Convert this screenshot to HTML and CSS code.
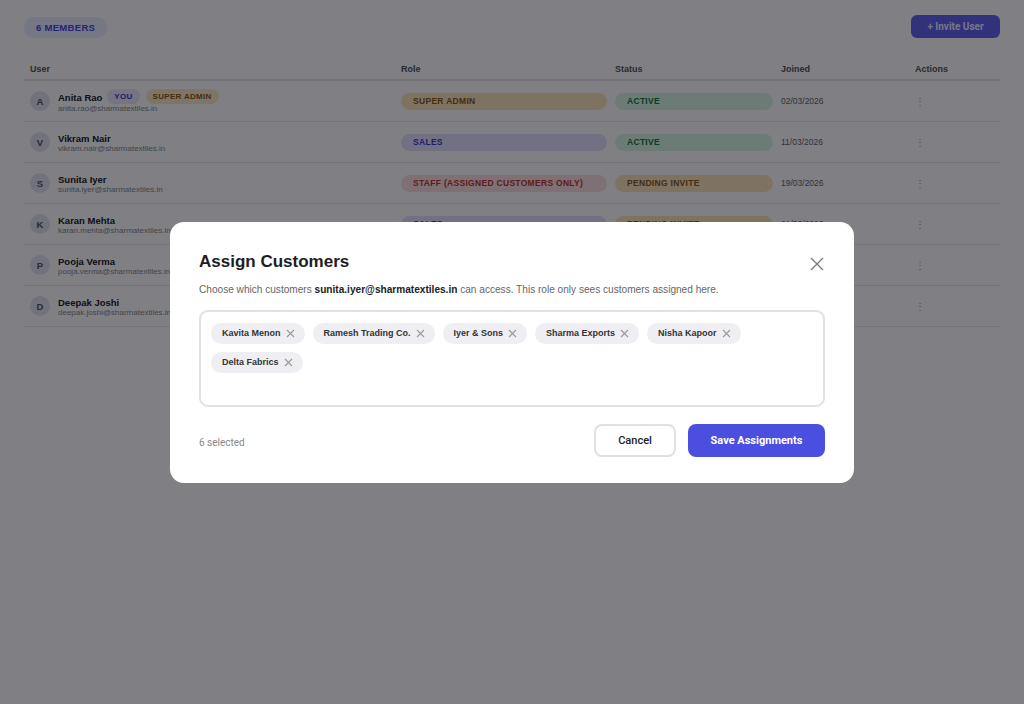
FILE: index.html
```html
<!DOCTYPE html>
<html>

<head>
    <meta http-equiv="Content-Type" content="text/html;charset=UTF-8" />
    <meta name="viewport" content="width=device-width,initial-scale=1">
    <title>Team Members</title>
    <link rel="stylesheet" href="styles.css">
</head>

<body>
    <div class="page">
        <div class="toolbar">
            <span class="count">6 MEMBERS</span>
            <button class="invite">+ Invite User</button>
        </div>
        <div class="table">
            <div class="row head">
                <div class="cell">User</div>
                <div class="cell">Role</div>
                <div class="cell">Status</div>
                <div class="cell">Joined</div>
                <div class="cell">Actions</div>
            </div>
            <div class="row">
                <div class="cell user">
                    <span class="avatar">A</span>
                    <div class="who">
                        <div class="name">Anita Rao <span class="tag you">YOU</span><span class="tag admin">SUPER ADMIN</span></div>
                        <div class="email">anita.rao@sharmatextiles.in</div>
                    </div>
                </div>
                <div class="cell"><span class="pill yellow">SUPER ADMIN</span></div>
                <div class="cell"><span class="pill green">ACTIVE</span></div>
                <div class="cell date">02/03/2026</div>
                <div class="cell more">&#8942;</div>
            </div>
            <div class="row">
                <div class="cell user">
                    <span class="avatar">V</span>
                    <div class="who">
                        <div class="name">Vikram Nair</div>
                        <div class="email">vikram.nair@sharmatextiles.in</div>
                    </div>
                </div>
                <div class="cell"><span class="pill purple">SALES</span></div>
                <div class="cell"><span class="pill green">ACTIVE</span></div>
                <div class="cell date">11/03/2026</div>
                <div class="cell more">&#8942;</div>
            </div>
            <div class="row">
                <div class="cell user">
                    <span class="avatar">S</span>
                    <div class="who">
                        <div class="name">Sunita Iyer</div>
                        <div class="email">sunita.iyer@sharmatextiles.in</div>
                    </div>
                </div>
                <div class="cell"><span class="pill red">STAFF (ASSIGNED CUSTOMERS ONLY)</span></div>
                <div class="cell"><span class="pill yellow">PENDING INVITE</span></div>
                <div class="cell date">19/03/2026</div>
                <div class="cell more">&#8942;</div>
            </div>
            <div class="row">
                <div class="cell user">
                    <span class="avatar">K</span>
                    <div class="who">
                        <div class="name">Karan Mehta</div>
                        <div class="email">karan.mehta@sharmatextiles.in</div>
                    </div>
                </div>
                <div class="cell"><span class="pill purple">SALES</span></div>
                <div class="cell"><span class="pill yellow">PENDING INVITE</span></div>
                <div class="cell date">21/03/2026</div>
                <div class="cell more">&#8942;</div>
            </div>
            <div class="row">
                <div class="cell user">
                    <span class="avatar">P</span>
                    <div class="who">
                        <div class="name">Pooja Verma</div>
                        <div class="email">pooja.verma@sharmatextiles.in</div>
                    </div>
                </div>
                <div class="cell"><span class="pill red">STAFF (ASSIGNED CUSTOMERS ONLY)</span></div>
                <div class="cell"><span class="pill green">ACTIVE</span></div>
                <div class="cell date">24/03/2026</div>
                <div class="cell more">&#8942;</div>
            </div>
            <div class="row">
                <div class="cell user">
                    <span class="avatar">D</span>
                    <div class="who">
                        <div class="name">Deepak Joshi</div>
                        <div class="email">deepak.joshi@sharmatextiles.in</div>
                    </div>
                </div>
                <div class="cell"><span class="pill purple">SALES</span></div>
                <div class="cell"><span class="pill green">ACTIVE</span></div>
                <div class="cell date">27/03/2026</div>
                <div class="cell more">&#8942;</div>
            </div>
        </div>
    </div>

    <div class="overlay">
        <div class="modal">
            <div class="modal_head">
                <h2>Assign Customers</h2>
                <button class="close" aria-label="Close">
                    <svg width="14" height="14" viewBox="0 0 14 14"><path d="M1 1L13 13M13 1L1 13" stroke="#777" stroke-width="1.3" fill="none"/></svg>
                </button>
            </div>
            <p class="desc">Choose which customers <b>sunita.iyer@sharmatextiles.in</b> can access. This role only sees customers assigned here.</p>
            <div class="picker">
                <span class="chip">Kavita Menon <svg class="x" viewBox="0 0 9 9"><path d="M1 1L8 8M8 1L1 8"/></svg></span>
                <span class="chip">Ramesh Trading Co. <svg class="x" viewBox="0 0 9 9"><path d="M1 1L8 8M8 1L1 8"/></svg></span>
                <span class="chip">Iyer &amp; Sons <svg class="x" viewBox="0 0 9 9"><path d="M1 1L8 8M8 1L1 8"/></svg></span>
                <span class="chip">Sharma Exports <svg class="x" viewBox="0 0 9 9"><path d="M1 1L8 8M8 1L1 8"/></svg></span>
                <span class="chip">Nisha Kapoor <svg class="x" viewBox="0 0 9 9"><path d="M1 1L8 8M8 1L1 8"/></svg></span>
                <span class="chip">Delta Fabrics <svg class="x" viewBox="0 0 9 9"><path d="M1 1L8 8M8 1L1 8"/></svg></span>
            </div>
            <div class="modal_foot">
                <span class="selected">6 selected</span>
                <div class="actions">
                    <button class="btn cancel">Cancel</button>
                    <button class="btn save">Save Assignments</button>
                </div>
            </div>
        </div>
    </div>
</body>

</html>
```

FILE: styles.css
```css
* {
    margin: 0;
    padding: 0;
    box-sizing: border-box;
}

html {
    font-family: "Liberation Sans", Arial, sans-serif;
    background: #fff;
    color: #222;
}

button {
    font-family: Roboto, "Liberation Sans", sans-serif;
    border: 0;
    background: none;
    cursor: pointer;
}

.page {
    padding: 15px 24px;
}

.toolbar {
    display: flex;
    justify-content: space-between;
    align-items: center;
    height: 23px;
}

.count {
    background: #eceefe;
    color: #4f46e5;
    font-size: 9.5px;
    font-weight: 700;
    letter-spacing: 0.3px;
    padding: 5px 12px;
    border-radius: 10px;
    margin-top: 1px;
}

.invite {
    background: #6262ee;
    color: #ececff;
    font-size: 10px;
    font-weight: 700;
    height: 23px;
    width: 89px;
    border-radius: 6px;
}

.table {
    margin-top: 21px;
}

.row {
    display: grid;
    grid-template-columns: 371px 214px 166px 134px 91px;
    align-items: center;
    height: 41px;
    border-bottom: 1px solid #e6e6e9;
}

.row.head {
    height: 22px;
    border-bottom: 2px solid #e6e6e9;
    font-size: 9px;
    font-weight: 700;
    color: #555;
}

.cell {
    padding: 0 2px 0 6px;
}

.user {
    display: flex;
    align-items: center;
    gap: 8px;
}

.avatar {
    width: 20px;
    height: 20px;
    border-radius: 50%;
    background: #e4e4f0;
    color: #555;
    font-size: 9.5px;
    font-weight: 700;
    display: flex;
    align-items: center;
    justify-content: center;
}

.who {
    padding-top: 4px;
}

.name {
    font-size: 9.5px;
    font-weight: 700;
    color: #222;
    display: flex;
    align-items: center;
    margin-top: -2px;
}

.email {
    font-size: 8px;
    color: #888;
}

.tag {
    font-size: 8px;
    font-weight: 700;
    letter-spacing: 0.3px;
    padding: 3px 7px;
    border-radius: 8px;
    margin-top: -3px;
}

.tag.you {
    background: #e8e8fb;
    color: #4338ca;
    margin-left: 5px;
}

.tag.admin {
    background: #fcebc4;
    color: #8a5a12;
    margin-left: 6px;
}

.pill {
    display: block;
    height: 17px;
    line-height: 17px;
    padding: 0 12px;
    border-radius: 9px;
    font-size: 8.5px;
    font-weight: 700;
    letter-spacing: 0.3px;
    white-space: nowrap;
}

.yellow { background: #fde7b7; color: #8a5a12; }
.green { background: #d9f6e2; color: #167a3e; }
.purple { background: #e2e3fd; color: #4338ca; }
.red { background: #fde0e0; color: #c0392b; }

.date {
    font-size: 8.5px;
    color: #666;
}

.more {
    font-size: 10px;
    color: #999;
}

/* modal */
.overlay {
    position: fixed;
    top: 0;
    left: 0;
    right: 0;
    bottom: 0;
    background: rgba(0, 0, 10, 0.5);
    display: flex;
    align-items: center;
    justify-content: center;
}

.modal {
    width: 684px;
    background: #fff;
    border-radius: 14px;
    padding: 30px 29px 26px 29px;
}

.modal_head {
    display: flex;
    justify-content: space-between;
    align-items: center;
}

.modal_head h2 {
    font-size: 17px;
    font-weight: 700;
    color: #1d1d1f;
}

.close {
    width: 14px;
    height: 14px;
    margin-right: 1px;
    margin-top: 4px;
}

.desc {
    margin-top: 12px;
    font-size: 10.1px;
    color: #666;
}

.desc b {
    color: #222;
}

.picker {
    margin-top: 15px;
    min-height: 97px;
    border: 2px solid #e1e1e5;
    border-radius: 9px;
    padding: 11px 10px 10px;
    display: flex;
    flex-wrap: wrap;
    align-content: flex-start;
    gap: 8px;
}

.chip {
    display: inline-flex;
    align-items: center;
    height: 21px;
    padding: 0 10px 0 11px;
    border-radius: 11px;
    background: #efeff3;
    font-size: 9px;
    font-weight: 700;
    color: #333;
}

.chip .x {
    width: 9px;
    height: 9px;
    margin-left: 5px;
    stroke: #999;
    stroke-width: 1.1;
    fill: none;
}

.modal_foot {
    margin-top: 17px;
    display: flex;
    justify-content: space-between;
    align-items: center;
}

.selected {
    font-size: 10px;
    color: #888;
    font-family: Roboto, sans-serif;
    padding-top: 5px;
}

.actions {
    display: flex;
    gap: 12px;
}

.btn {
    height: 33px;
    border-radius: 8px;
    font-size: 11px;
}

.cancel {
    width: 82px;
    border: 2px solid #e1e1e5;
    color: #222;
    font-weight: 500;
    background: #fff;
}

.save {
    width: 137px;
    background: #4b4fe0;
    color: #fff;
    font-weight: 700;
}
```
